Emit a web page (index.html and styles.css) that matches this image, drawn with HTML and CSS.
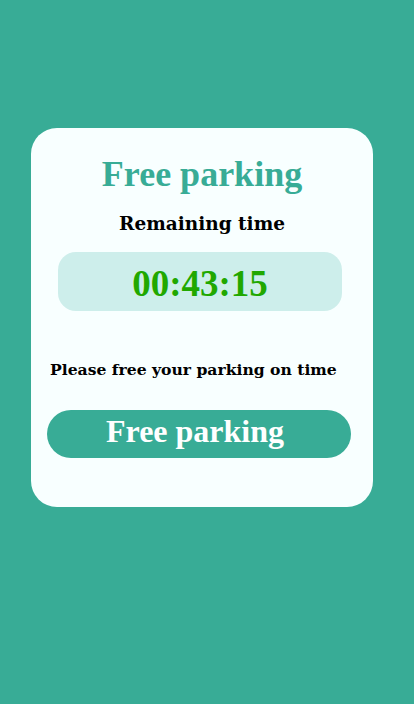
FILE: index.html
```html
<!DOCTYPE html>
<html lang="en">
<head>
<meta charset="utf-8">
<title>Free parking</title>
<link rel="stylesheet" href="styles.css">
</head>
<body>
<main class="page">
  <section class="card">
    <h1 class="title">Free parking</h1>
    <p class="label">Remaining time</p>
    <div class="timer">00:43:15</div>
    <p class="notice">Please free your parking on time</p>
    <button class="btn" type="button">Free parking</button>
  </section>
</main>
</body>
</html>
```
FILE: styles.css
```css
html, body {
  margin: 0;
  padding: 0;
  height: 100%;
}
body {
  background: #38ac96;
  font-family: "DejaVu Serif", "Liberation Serif", serif;
}
.page {
  padding: 128px 41px 0 31px;
}
.card {
  background: #f8ffff;
  border-radius: 26px;
  height: 379px;
  box-sizing: border-box;
  padding: 24px 22px 0 16px;
  display: flex;
  flex-direction: column;
}
.title {
  margin: 0;
  text-align: center;
  color: #38ac96;
  font-family: "Liberation Serif", serif;
  font-size: 36px;
  font-weight: bold;
  line-height: 44px;
  padding-left: 6px;
}
.label {
  margin: 14px 0 0;
  text-align: center;
  font-size: 18.5px;
  font-weight: bold;
  line-height: 28px;
  color: #000;
  padding-left: 6px;
}
.timer {
  margin: 14px 9px 0 11px;
  height: 59px;
  border-radius: 18px;
  background: #cdeeeb;
  color: #21a800;
  font-family: "Liberation Serif", serif;
  font-size: 37px;
  font-weight: bold;
  display: flex;
  align-items: center;
  justify-content: center;
  padding-top: 4px;
  box-sizing: border-box;
}
.notice {
  margin: 48px 0 0 3px;
  font-size: 15.6px;
  font-weight: bold;
  line-height: 22px;
  color: #000;
}
.btn {
  margin: 29px 0 0 0;
  height: 48px;
  border: none;
  border-radius: 24px;
  background: #38ac96;
  color: #fff;
  font-family: "Liberation Serif", serif;
  font-size: 32px;
  font-weight: bold;
  padding: 0 8px 7px 0;
  line-height: 1;
}
```
